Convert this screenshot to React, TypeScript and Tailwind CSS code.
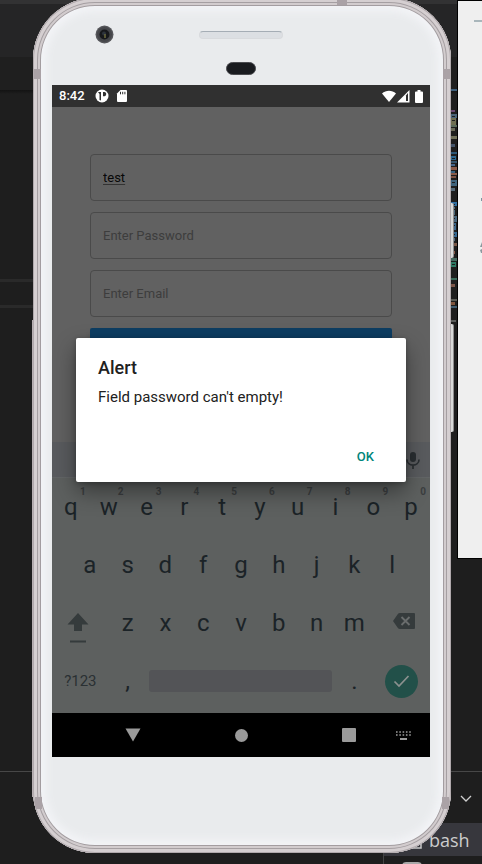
import React from "react";

type MiniLine = [y: number, h: number, color: string];

const MINIMAP: MiniLine[] = [
  [89, 2, "#3d5f7c"], [110, 2, "#6b4a72"], [114, 4, "#4a6478"], [118, 7, "#6f6f52"], [125, 2, "#5a6a5a"],
  [128, 3, "#6a6a58"], [136, 3, "#6f6f58"], [144, 3, "#44546a"], [152, 2, "#2d5878"], [156, 4, "#2d6890"],
  [161, 2, "#34526a"], [164, 2, "#44648a"], [167, 3, "#8a5a48"], [171, 2, "#37617e"], [173, 2, "#8a5a48"],
  [176, 2, "#7d5242"], [180, 6, "#3f637c"], [188, 3, "#566b7a"], [202, 4, "#2f6da0"], [207, 8, "#4d6a7c"],
  [216, 6, "#47647a"], [223, 7, "#3c668a"], [232, 5, "#35678f"], [238, 3, "#4d6a7c"], [243, 3, "#7b5848"],
  [251, 3, "#8a5a48"], [258, 3, "#46695f"], [262, 5, "#2f7a64"], [278, 2, "#3b6a5a"], [284, 3, "#7b5548"],
  [299, 2, "#5a5c56"], [302, 3, "#80563f"], [306, 2, "#405c70"], [320, 2, "#5a5c5a"],
];

function Minimap() {
  return (
    <svg className="absolute left-[450px] top-0" width="7" height="330" shapeRendering="crispEdges" aria-hidden="true">
      {MINIMAP.map(([y, h, color], i) => (
        <g key={y}>
          <rect x={i % 3 === 0 ? 1 : 0} y={y} width={i % 2 === 0 ? 7 : 5} height={h} fill={color} />
          {h > 3 && <rect x="2" y={y + 2} width="3" height="1" fill="#1e1e1e" />}
        </g>
      ))}
    </svg>
  );
}

function Desktop() {
  return (
    <div className="absolute inset-0 overflow-hidden bg-[#1e1e1e]">
      <div className="h-1 bg-[#323233]" />
      <div className="h-[53px] bg-[#252526]" />
      <div className="h-[33px] bg-[#1f1f1f]" />
      <div className="h-1 bg-gradient-to-b from-[#131313] to-[#1e1e1e]" />
      <div className="absolute left-0 top-[279px] h-[3px] w-10 bg-[#2a2a2a]" />
      <div className="absolute left-0 top-[305px] h-[3px] w-10 bg-[#2a2a2a]" />
      <div className="absolute inset-x-0 top-[771px] h-px bg-[#474747]" />
      <Minimap />
      <div className="absolute left-[457px] right-0 top-0 h-[559px] border border-r-0 border-black bg-[#efefef]">
        <div className="absolute right-0 top-[19px] h-0.5 w-2 bg-[#a9b6bb]" />
        <div className="absolute right-0 top-[197px] h-[3px] w-px bg-[#7e95a0]" />
        <svg className="absolute right-0 top-[241px]" width="3" height="12" aria-hidden="true">
          <path d="M3 0 1 5h2M1 8l2-1v4H2z" fill="#8b989e" />
        </svg>
      </div>
      <svg className="absolute left-[459px] top-[793px]" width="14" height="12" fill="none" stroke="#cfcfcf" strokeWidth="1.3" aria-hidden="true">
        <path d="m2 3 5 5 5-5" />
      </svg>
      <div className="absolute bottom-0 left-[383px] right-0 top-[823px] border-l border-[#444444]">
        <div className="flex h-[33px] items-center gap-[7px] bg-[#37373d] pl-[18px]">
          <svg width="20" height="20" fill="none" stroke="#c8c8c8" strokeWidth="1.5" aria-hidden="true">
            <rect x="1" y="1" width="18" height="17" />
            <path d="m5 6 4 4-4 4" />
          </svg>
          <span className="font-['Open_Sans',sans-serif] text-[18px] leading-6 text-[#cccccc]">bash</span>
        </div>
        <div className="ml-[18px] mt-1.5 h-3 w-5 rounded-t-sm border-2 border-[#a8a8a8] bg-[#8a8a8a]" />
      </div>
    </div>
  );
}

function PhoneTop() {
  return (
    <div className="grid h-[87px] grid-cols-3">
      <svg className="ml-[43px] mt-[27px]" width="19" height="19" aria-hidden="true">
        <circle cx="9.5" cy="9.5" r="9" fill="#55565a" />
        <circle cx="9.5" cy="9.5" r="7.5" fill="#45464a" />
        <circle cx="9.5" cy="9.5" r="5" fill="#17181c" />
        <circle cx="9" cy="8.5" r="2" fill="#2d333c" />
        <path d="M10 9v4" stroke="#6d6a3c" strokeWidth="1.5" />
      </svg>
      <div className="flex flex-col items-center">
        <div className="mt-[33px] h-2 w-[84px] rounded-[4px] border border-[#d8dadd] border-t-[#a5adb5] bg-[#dcdfe3]" />
        <div className="mt-[23px] h-[13px] w-[30px] rounded-full border border-[#4a4b4f] bg-[#191b1f]" />
      </div>
    </div>
  );
}

function StatusBar() {
  return (
    <div className="flex h-[22px] items-center bg-[#303030] px-[7px] text-white">
      <span className="text-[13px] font-medium leading-[22px]">8:42</span>
      <svg className="ml-2.5" width="14" height="14" aria-hidden="true">
        <circle cx="7" cy="7" r="6.5" fill="#fff" />
        <path d="M3 3h3v8.500L4.500 11V5zM8 3h1.500c2.300 0 2.300 4.200 0 4.200H8z" fill="#303030" />
      </svg>
      <svg className="ml-[7px]" width="12" height="14" aria-hidden="true">
        <path d="M4.500 1H10q1 0 1 1v10q0 1-1 1H2q-1 0-1-1V4.500z" fill="#fff" />
        <path d="M4.500 2.800v2.500M6.700 2.800v2.500M8.900 2.800v2.500" stroke="#303030" strokeWidth="1" />
      </svg>
      <svg className="ml-auto" width="14" height="13" aria-hidden="true">
        <path d="M0 3.500C4-.2 10-.2 14 3.500L7 12z" fill="#fff" />
      </svg>
      <svg className="ml-px" width="13" height="13" aria-hidden="true">
        <path d="M0 12.500 12.500 0v12.500z" fill="#fff" />
        <path d="M9 5.500V11h2V3z" fill="#303030" />
      </svg>
      <svg className="ml-[5px]" width="8" height="13" aria-hidden="true">
        <path d="M2.500 0h3v1.500H7q1 0 1 1V12q0 1-1 1H1q-1 0-1-1V2.500q0-1 1-1h1.500z" fill="#fff" />
      </svg>
    </div>
  );
}

const FIELD =
  "block h-[47px] w-full rounded-[4px] border border-[#4a4a4a] bg-transparent px-3 text-[13px] text-[#080808] placeholder:text-[#3d3d3d] focus:outline-none";

function SignUpForm() {
  return (
    <form className="flex h-[335px] flex-col gap-[11px] bg-[#616161] px-[38px] pt-[47px]" onSubmit={(e) => e.preventDefault()}>
      <input aria-label="Username" className={`${FIELD} underline decoration-[#333333] underline-offset-2`} defaultValue="test" spellCheck={false} />
      <input aria-label="Password" type="password" className={FIELD} placeholder="Enter Password" />
      <input aria-label="Email" type="email" className={FIELD} placeholder="Enter Email" />
      <button aria-label="Register" type="submit" className="h-[46px] rounded-[2px] bg-[#0d3d62] shadow-md" />
    </form>
  );
}

function Key({ label, hint }: { label: string; hint?: string }) {
  return (
    <button type="button" className="relative col-span-2 flex h-[58px] items-center justify-center text-2xl">
      {label}
      {hint && <span className="absolute right-1 top-2 text-[10px] font-bold leading-3 text-[#3b3e40]">{hint}</span>}
    </button>
  );
}

function Keyboard() {
  return (
    <div className="bg-[#5d605f] text-[#1b2327]">
      <div className="flex h-9 items-center justify-end border-b border-[#626566] bg-[#595b5e] pr-[9px]">
        <button type="button" aria-label="Voice input">
          <svg width="16" height="20" fill="none" stroke="#2a2f32" strokeWidth="1.7" aria-hidden="true">
            <rect x="5" y="2" width="6" height="10" rx="3" fill="#2a2f32" stroke="none" />
            <path d="M2 9.500c0 7.500 12 7.500 12 0M8 15v4" />
          </svg>
        </button>
      </div>
      <div className="grid grid-cols-20 pb-[3px]">
        {"qwertyuiop".split("").map((c, i) => (
          <Key key={c} label={c} hint={String((i + 1) % 10)} />
        ))}
        <span />
        {"asdfghjkl".split("").map((c) => (
          <Key key={c} label={c} />
        ))}
        <span />
        <button type="button" aria-label="Shift" className="col-span-3 flex items-center justify-center pr-1 pt-2">
          <svg width="22" height="31" fill="#353b3c" aria-hidden="true">
            <path d="M11 1 21.500 12.500H15V19H7v-6.500H.5z" />
            <path d="M3 28.500h16v2H3z" />
          </svg>
        </button>
        {"zxcvbnm".split("").map((c) => (
          <Key key={c} label={c} />
        ))}
        <button type="button" aria-label="Backspace" className="col-span-3 flex items-center justify-center pb-1 pl-1">
          <svg width="22" height="16" aria-hidden="true">
            <path d="M7 0h14q1 0 1 1v14q0 1-1 1H7q-1.500 0-2.300-1.200L0 8l4.700-6.800Q5.500 0 7 0z" fill="#353b3c" />
            <path d="m8.500 4 8 8m0-8-8 8" stroke="#6a6d6d" strokeWidth="1.8" />
          </svg>
        </button>
        <button type="button" className="col-span-3 text-[15px] text-[#2a3033]">?123</button>
        <Key label="," />
        <div className="col-span-10 flex items-center px-[3px]">
          <button type="button" aria-label="Space" className="h-[22px] w-full rounded-[3px] bg-[#535457]" />
        </div>
        <Key label="." />
        <div className="col-span-3 flex items-center justify-center">
          <button type="button" aria-label="Done" className="flex size-[33px] items-center justify-center rounded-full bg-[#225049]">
            <svg width="17" height="14" fill="none" stroke="#8c918f" strokeWidth="1.7" aria-hidden="true">
              <path d="m1.500 7.500 4.500 4.500L15.500 2" />
            </svg>
          </button>
        </div>
      </div>
    </div>
  );
}

function AlertDialog() {
  return (
    <div className="absolute inset-0 flex items-center px-6">
      <div
        role="alertdialog"
        aria-labelledby="alert-title"
        aria-describedby="alert-text"
        className="flex h-36 w-full flex-col rounded-[2px] bg-white px-[22px] pt-[18px] text-[#212121] shadow-[0_10px_22px_rgba(0,0,0,0.4),0_1px_5px_rgba(0,0,0,0.25)]"
      >
        <h1 id="alert-title" className="text-[18px] font-medium leading-6">Alert</h1>
        <p id="alert-text" className="mt-[7px] text-[15px] leading-5">Field password can&apos;t empty!</p>
        <button type="button" className="mb-[9px] ml-auto mt-auto px-[10px] text-[13px] font-medium leading-8 text-[#00857a]">OK</button>
      </div>
    </div>
  );
}

function NavBar() {
  return (
    <nav className="grid h-11 grid-cols-7 items-center justify-items-center bg-black">
      <button type="button" aria-label="Back" className="col-start-2">
        <svg width="16" height="14" fill="#9a9a9a" aria-hidden="true"><path d="M.5.5h15L8 13.500z" /></svg>
      </button>
      <button type="button" aria-label="Home" className="col-start-4 size-[13px] rounded-full bg-[#9a9a9a]" />
      <button type="button" aria-label="Recent apps" className="col-start-6 size-3.5 rounded-[1px] bg-[#9a9a9a]" />
      <button type="button" aria-label="Switch keyboard">
        <svg width="15" height="9" fill="none" stroke="#9a9a9a" strokeWidth="1.5" aria-hidden="true">
          <path d="M0 1h15M0 4h15" strokeDasharray="1.6 1.7" />
          <path d="M4 8h7" strokeWidth="2" />
        </svg>
      </button>
    </nav>
  );
}

const BAND = "absolute bg-[#aaa2a6]";

export default function App() {
  return (
    <div className="relative min-h-screen overflow-hidden font-[Roboto,sans-serif]">
      <Desktop />
      <div className="relative ml-[33px] mr-[31px] -mt-0.5">
        <div className="absolute -right-[3px] top-[205px] h-[55px] w-2 rounded-[2px] border-r border-[#8f8d8e] bg-[#d9dad9]" />
        <div className="absolute -right-[3px] top-[326px] h-[108px] w-2 rounded-[2px] border-r border-[#8f8d8e] bg-[#d9dad9]" />
        <div className="absolute -left-px bottom-14 top-[322px] w-2 bg-[#b7afb2]" />
        <div className="relative overflow-hidden rounded-[62px] bg-[#e9ebed] pb-24 pl-[19px] pr-[21px] shadow-[inset_0_0_0_1px_#b0a9ac,inset_0_0_0_4px_#d5cfd1,inset_0_0_0_5px_#a59fa2,inset_0_0_0_7px_#d2ccce,inset_0_0_0_8px_#a39da0,inset_0_0_9px_13px_#f3f4f7]">
          <div className={`${BAND} left-px top-[71px] h-2.5 w-[7px]`} />
          <div className={`${BAND} right-px top-[71px] h-2.5 w-[7px]`} />
          <div className={`${BAND} left-[304px] top-0 h-[7px] w-2.5`} />
          <div className={`${BAND} bottom-11 left-0.5 h-3 w-[7px]`} />
          <div className={`${BAND} bottom-11 right-0.5 h-3 w-[7px]`} />
          <PhoneTop />
          <main>
            <StatusBar />
            <div className="relative">
              <SignUpForm />
              <Keyboard />
              <AlertDialog />
            </div>
            <NavBar />
          </main>
        </div>
      </div>
    </div>
  );
}
